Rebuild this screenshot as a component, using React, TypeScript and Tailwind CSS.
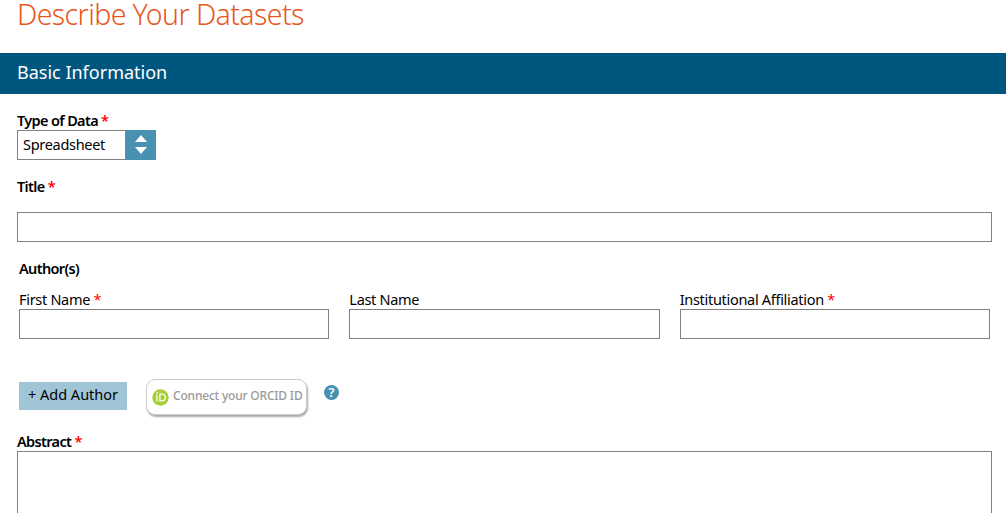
import React from "react";

function Required() {
  return <span className="text-[#ff0000]"> *</span>;
}

function Label({ text, required, className = "" }: { text: string; required?: boolean; className?: string }) {
  return (
    <label className={`block h-[18px] whitespace-pre leading-[18px] ${className}`}>
      {text}
      {required && <Required />}
    </label>
  );
}

const strong = "text-[14.5px] font-semibold tracking-[-0.65px]";
const plain = "text-[14.5px] tracking-[-0.3px]";

function TextInput() {
  return <input className="block h-[30px] w-full border border-[#808080] bg-white px-1.5 outline-none" />;
}

export default function App() {
  return (
    <main className="h-[513px] w-full overflow-hidden bg-white font-['Noto_Sans',sans-serif] text-black">
      <h1 className="h-[53px] pl-[17px] text-[28.5px] font-light leading-[28px] tracking-[-0.6px] text-[#e8571f]">
        <span>Describe Your Datasets</span>
      </h1>
      <h2 className="flex h-[41px] items-center bg-[#00567f] pb-[3px] pl-[17px] text-[18px] text-white">
        <span>Basic Information</span>
      </h2>

      <form className="flex flex-col pl-[17px] pr-[14px] pt-[17px]">
        <Label text="Type of Data" required className={strong} />
        <div className="mt-px flex h-[30px] w-[139px] border border-[#808080]">
          <span className="flex-1 pl-[5px] text-[14.5px] leading-[27px] tracking-[-0.3px]">Spreadsheet</span>
          <span className="-my-px -mr-px flex w-[31px] items-center justify-center bg-[#4991b0]">
            <svg width="12" height="20" viewBox="0 0 12 20" fill="#fff">
              <path d="M6 0L12 7H0Z M0 12H12L6 19Z" />
            </svg>
          </span>
        </div>

        <Label text="Title" required className={`mt-[17px] ${strong}`} />
        <div className="mt-[17px]">
          <TextInput />
        </div>

        <section className="mt-[17px] px-[2px]">
          <Label text="Author(s)" className={strong} />
          <div className="mt-[13px] grid grid-cols-3 gap-5">
            <div>
              <Label text="First Name" required className={plain} />
              <div className="mt-px"><TextInput /></div>
            </div>
            <div>
              <Label text="Last Name" className={plain} />
              <div className="mt-px"><TextInput /></div>
            </div>
            <div>
              <Label text="Institutional Affiliation" required className={plain} />
              <div className="mt-px"><TextInput /></div>
            </div>
          </div>
          <div className="mt-[40px] flex h-[37px] items-start">
            <button type="button" className="mt-[3px] h-[28px] w-[108px] whitespace-nowrap bg-[#a0c5d6] pb-[3px] text-[14.5px] leading-[25px]">
              + Add Author
            </button>
            <button type="button" className="ml-[19px] flex h-[36px] w-[161px] items-center whitespace-nowrap rounded-[9px] border border-[#cccccc] bg-white pl-[5px] text-[12px] font-medium tracking-[-0.2px] text-[#999999] shadow-[1px_2px_2px_#aaaaaa]">
              <svg className="mr-[4px] shrink-0" width="17" height="17" viewBox="0 0 17 17">
                <circle cx="8.5" cy="8.5" r="8.2" fill="#a6ce39" />
                <path d="M5 6.1V12.5M7.9 5.1V11.9H10C14.5 11.9 14.5 5.1 10 5.1Z" fill="none" stroke="#fff" strokeWidth="1.3" />
                <circle cx="5" cy="4.1" r="0.9" fill="#fff" />
              </svg>
              <span className="pb-[2px]">Connect your ORCID ID</span>
            </button>
            <span className="ml-[17px] mt-[6px] flex h-[15px] w-[15px] items-center justify-center rounded-full bg-[#4991b0] text-[13px] font-semibold leading-[15px] text-white">
              ?
            </span>
          </div>
        </section>

        <Label text="Abstract" required className={`mt-[16px] ${strong}`} />
        <textarea className="mt-px block h-[90px] w-full resize-none border border-[#808080] bg-white outline-none" />
      </form>
    </main>
  );
}
